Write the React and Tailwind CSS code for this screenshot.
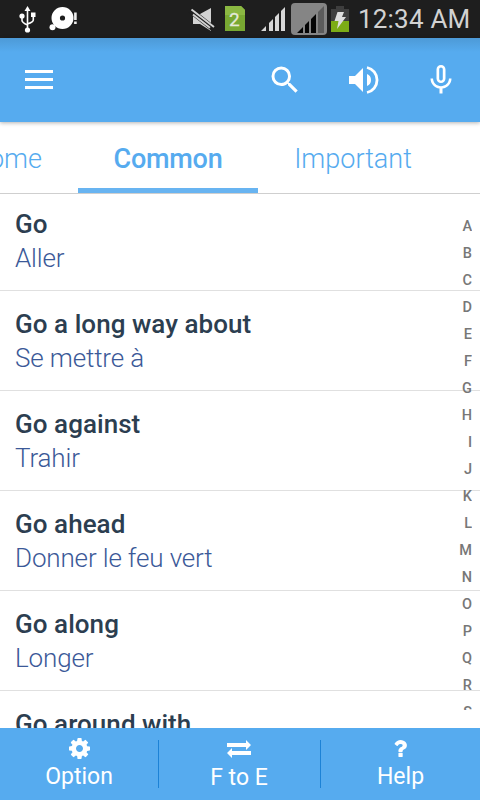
import { MdSearch, MdMicNone } from "react-icons/md";

const phrases = [
  ["Go", "Aller"],
  ["Go a long way about", "Se mettre à"],
  ["Go against", "Trahir"],
  ["Go ahead", "Donner le feu vert"],
  ["Go along", "Longer"],
  ["Go around with", "Sortir avec"],
];

const letters = "ABCDEFGHIJKLMNOPQRS".split("");

function StatusBar() {
  return (
    <div className="flex h-[38px] shrink-0 items-start bg-[#1e1e1e] text-[#d2d2d2]">
      <svg className="h-[38px] w-[355px] shrink-0" viewBox="0 0 355 38">
        <g fill="#fff" stroke="none">
          <path d="M27.5 6l3 5h-6z" />
          <circle cx="27.5" cy="30" r="2.6" />
          <circle cx="22" cy="16" r="2.6" />
          <rect x="31" y="12.5" width="4.5" height="4.5" />
        </g>
        <path d="M27.5 10v19M22 17v3.5q0 2 5.5 4.5M33.3 16v4q0 2-5.8 4" fill="none" stroke="#fff" strokeWidth="1.6" />
        <circle cx="62.5" cy="18" r="6.8" fill="none" stroke="#fff" strokeWidth="8.4" />
        <circle cx="52.5" cy="27.2" r="3" fill="#fff" />
        <path d="M75.4 12.5v7.500M75.4 21.5v2.5" stroke="#eee" strokeWidth="2.6" />
        <path d="M193 14h7l11-6v23l-11-7h-7z" fill="#d2d2d2" />
        <path d="M190.500 10.500l24 19" stroke="#1e1e1e" strokeWidth="6" />
        <path d="M191.500 9.500l22.500 17.500" stroke="#d2d2d2" strokeWidth="1.900" />
        <path d="M193 14.500l17 13.200" stroke="#d2d2d2" strokeWidth="1.800" />
        <path d="M225 6h16l4 4v21h-20z" fill="#78a832" />
        <path d="M225 6h16l4 4v5h-20z" fill="#8bb842" />
        <text x="229" y="26" fontSize="19" fontFamily="Roboto, sans-serif" fill="#e3e9d8" stroke="#e3e9d8" strokeWidth=".3">2</text>
        <path d="M261 31l5-5v5zM269 31v-8l4-4v12zM275 31V17l4-4v18zM281 31V11l4-4v24z" fill="#d8d8d8" />
        <rect x="291" y="3" width="36" height="32" rx="4" fill="#858585" />
        <path d="M318 33V12l6-6v27z" fill="#5c5c5c" />
        <path d="M297 33l6-6v6zM305 33v-8l4-4v12zM311 33V19l5-5v19z" fill="#050505" />
        <path d="M331 9h5V6h8v3h5v12h-18z" fill="#3e3e3e" />
        <rect x="331" y="21" width="18" height="11" fill="#7cac16" />
        <path d="M337.500 12h6.500l-2 5h4l-9 12 1.500-8h-4z" fill="#ddd" />
      </svg>
      <div className="mt-[3px] pl-[3px] text-[26px] leading-[32px] tracking-[0.2px] whitespace-nowrap">12:34 AM</div>
    </div>
  );
}

function Header() {
  return (
    <header className="z-10 flex h-[84px] shrink-0 items-center bg-[#56abef] bg-[linear-gradient(#4d9ad7,#56abef_14px)] pr-[21px] pl-[25px] text-white shadow-[0_1px_4px_rgba(0,0,0,0.3)]">
      <div className="mb-px flex w-[28px] flex-col gap-[5px]">
        <div className="h-[3px] bg-white" />
        <div className="h-[3px] bg-white" />
        <div className="h-[3px] bg-white" />
      </div>
      <MdSearch className="ml-auto size-[36px]" />
      <svg className="ml-[42px] size-[36px]" viewBox="345 62 36 36">
        <path d="M349 76h6l8-8v24l-8-8h-6zM367 74a6.500 6.500 0 0 1 0 12z" fill="currentColor" />
        <path d="M367 67.500a12.800 12.800 0 0 1 0 25" fill="none" stroke="currentColor" strokeWidth="2.800" />
      </svg>
      <MdMicNone className="ml-[42px] size-[36px]" />
    </header>
  );
}

function Tabs() {
  return (
    <nav className="flex h-[72px] shrink-0 border-b border-[#cfcfcf] text-[27px] font-light text-[#56abef]">
      <div className="flex w-[78px] shrink-0 justify-end pr-[36px] pt-[17px] leading-[40px] whitespace-nowrap">Welcome</div>
      <div className="w-[180px] shrink-0 border-b-[5px] border-[#68b4f1] pt-[17px] text-center leading-[40px] font-medium tracking-[-0.25px]">Common</div>
      <div className="w-[190px] shrink-0 pt-[17px] text-center leading-[40px]">Important</div>
    </nav>
  );
}

function Divider() {
  return <div className="my-[12px] w-px shrink-0 bg-[#1c82d6]" />;
}

export default function App() {
  return (
    <div className="flex h-[800px] w-[480px] flex-col overflow-hidden bg-white font-[Roboto,sans-serif]">
      <StatusBar />
      <Header />
      <Tabs />
      <main className="grid min-h-0 flex-1 overflow-hidden">
        <div className="col-start-1 row-start-1 -mt-[3px] min-h-0">
          {phrases.map(([title, translation]) => (
            <div key={title} className="h-[100px] border-b border-[#e0e0e0] pt-[16px] pl-[15px] text-[26px] leading-[34px]">
              <div className="font-medium tracking-[0.05px] text-[#2c3e50]">{title}</div>
              <div className="font-light tracking-[-0.15px] text-[#3b5998]">{translation}</div>
            </div>
          ))}
        </div>
        <div className="col-start-1 row-start-1 mt-[19px] mr-[8px] h-[497px] w-[20px] justify-self-end overflow-hidden text-right text-[14.5px] leading-[27px] font-medium text-[#777]">
          {letters.map((letter) => (
            <div key={letter}>{letter}</div>
          ))}
        </div>
      </main>
      <footer className="flex h-[72px] shrink-0 bg-[#56abef] text-[23px] leading-[28px] text-white">
        <div className="flex w-[158px] shrink-0 flex-col items-center pt-[10px]">
          <svg className="size-[21px]" viewBox="0 128 1536 1536" fill="currentColor">
            <path d="M1024 896q0-106-75-181t-181-75-181 75-75 181 75 181 181 75 181-75 75-181zm512-109v222q0 12-8 23t-20 13l-185 28q-19 54-39 91 35 50 107 138 10 12 10 25t-9 23q-27 37-99 108t-94 71q-12 0-26-9l-138-108q-44 23-91 38-16 136-29 186-7 28-36 28h-222q-14 0-24.5-8.5t-11.5-21.5l-28-184q-49-16-90-37l-141 107q-10 9-25 9-14 0-25-11-126-114-165-168-7-10-7-23 0-12 8-23 15-21 51-66.5t54-70.5q-27-50-41-99l-183-27q-13-2-21-12.5t-8-23.5v-222q0-12 8-23t19-13l186-28q14-46 39-92-40-57-107-138-10-12-10-24 0-10 9-23 26-36 98.5-107.5t94.5-71.5q13 0 26 10l138 107q44-23 91-38 16-136 29-186 7-28 36-28h222q14 0 24.5 8.5t11.5 21.5l28 184q49 16 90 37l142-107q9-9 24-9 13 0 25 10 129 119 165 170 7 8 7 22 0 12-8 23-15 21-51 66.5t-54 70.5q26 50 41 98l183 28q13 2 21 12.5t8 23.5z" />
          </svg>
          <div className="mt-[4px]">Option</div>
        </div>
        <Divider />
        <div className="flex w-[161px] shrink-0 flex-col items-center pt-[12px] pr-px">
          <svg className="h-[18px] w-[24px]" viewBox="0 0 24 18" fill="currentColor">
            <path d="M0 3h19V0l5 5-5 5V7H0zM24 11H5V8l-5 5 5 5v-3h19z" />
          </svg>
          <div className="mt-[6px]">F to E</div>
        </div>
        <Divider />
        <div className="flex flex-1 flex-col items-center pt-[12px]">
          <svg className="h-[17px] w-[13px]" viewBox="60 192 960 1280" fill="currentColor">
            <path d="M704 1192v240q0 16-12 28t-28 12h-240q-16 0-28-12t-12-28v-240q0-16 12-28t28-12h240q16 0 28 12t12 28zm316-600q0 54-15.5 101t-35 76.5-55 59.5-57.5 43.5-61 35.5q-41 23-68.5 65t-27.5 67q0 17-12 32.5t-28 15.5h-240q-15 0-25.5-18.5t-10.5-37.5v-45q0-83 65-156.5t143-108.5q59-27 84-56t25-76q0-42-46.5-74t-107.5-32q-65 0-108 29-35 25-107 115-13 16-31 16-12 0-25-8l-164-125q-13-10-15.5-25t5.5-28q160-266 464-266 80 0 161 31t146 83 106 127.5 41 158.5z" />
          </svg>
          <div className="mt-[6px]">Help</div>
        </div>
      </footer>
    </div>
  );
}
